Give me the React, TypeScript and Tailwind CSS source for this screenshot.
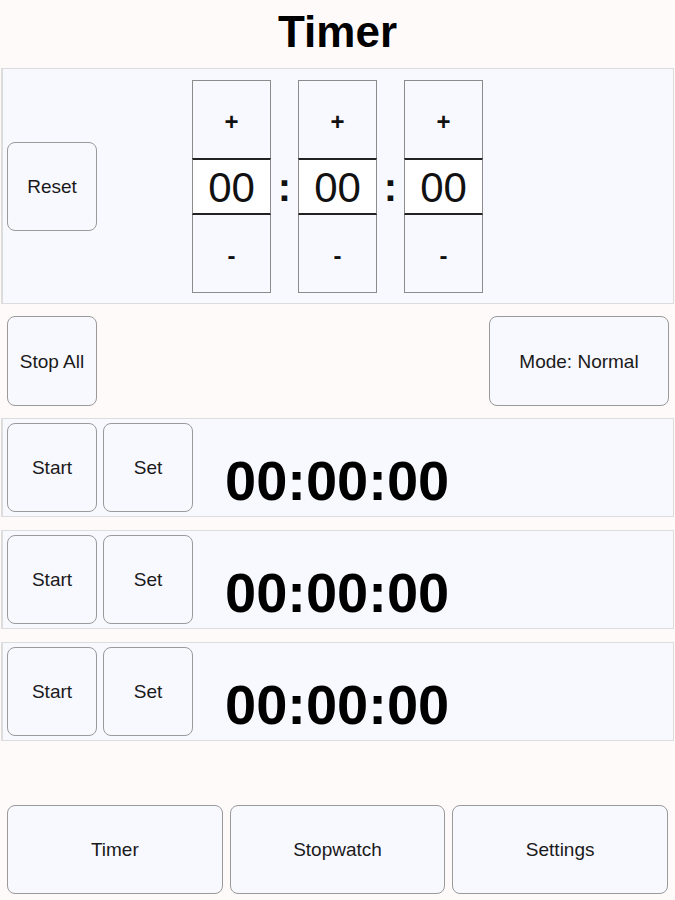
import React from 'react'

const btn =
  'flex items-center justify-center rounded-lg border border-[#9a9a9a] bg-[#f8f8ff] text-[19px] text-[#1a1a1a] pt-[2px]'

function Spinner() {
  return (
    <div className="flex w-[79px] flex-col">
      <div className="flex h-[78px] items-center justify-center border border-[#8c8c8c] border-b-0 bg-[#f8f8ff] pt-[6px] text-[24px] font-bold text-[#111]">
        +
      </div>
      <div className="flex h-[57px] items-center justify-center border-x border-y-2 border-x-[#8c8c8c] border-y-[#222] bg-white pt-[3px] text-[42px] leading-none text-[#111]">
        00
      </div>
      <div className="flex h-[78px] items-center justify-center border border-[#8c8c8c] border-t-0 bg-[#f8f8ff] pt-[6px] text-[24px] font-bold text-[#111]">
        -
      </div>
    </div>
  )
}

function Colon() {
  return (
    <div className="flex w-[27px] items-center justify-center pt-[2px] text-[40px] font-bold leading-none text-[#111]">
      :
    </div>
  )
}

function TimerRow() {
  return (
    <div className="mx-px flex h-[99px] items-center gap-[6px] border border-[#dcdcdc] border-l-2 bg-[#f8f8ff] pl-[4px]">
      <button className={`${btn} h-[89px] w-[90px]`}>Start</button>
      <button className={`${btn} h-[89px] w-[90px]`}>Set</button>
      <div className="ml-[26px] pt-[26px] text-[56px] font-bold leading-none text-black">
        00:00:00
      </div>
    </div>
  )
}

export default function App() {
  return (
    <div
      className="flex h-[900px] w-[675px] flex-col bg-[#fffafa]"
      style={{ fontFamily: '"Liberation Sans", Arial, sans-serif' }}
    >
      {/* title */}
      <div className="flex h-[68px] items-center justify-center pb-[4px] text-[44px] font-bold text-black">
        Timer
      </div>

      {/* time setter */}
      <div className="mx-px flex h-[236px] items-center border border-[#dcdcdc] border-l-2 bg-[#f8f8ff] pl-[4px]">
        <button className={`${btn} h-[89px] w-[90px]`}>Reset</button>
        <div className="ml-[95px] flex">
          <Spinner />
          <Colon />
          <Spinner />
          <Colon />
          <Spinner />
        </div>
      </div>

      {/* controls */}
      <div className="mt-[12px] flex h-[90px] items-center justify-between pl-[7px] pr-[6px]">
        <button className={`${btn} h-[90px] w-[90px]`}>Stop All</button>
        <button className={`${btn} h-[90px] w-[180px]`}>Mode: Normal</button>
      </div>

      {/* timers */}
      <div className="mt-[12px] flex flex-col gap-[13px]">
        <TimerRow />
        <TimerRow />
        <TimerRow />
      </div>

      {/* bottom nav */}
      <div className="mt-auto mb-[6px] flex gap-[7px] px-[7px]">
        <button className={`${btn} h-[89px] flex-1`}>Timer</button>
        <button className={`${btn} h-[89px] flex-1`}>Stopwatch</button>
        <button className={`${btn} h-[89px] flex-1`}>Settings</button>
      </div>
    </div>
  )
}
